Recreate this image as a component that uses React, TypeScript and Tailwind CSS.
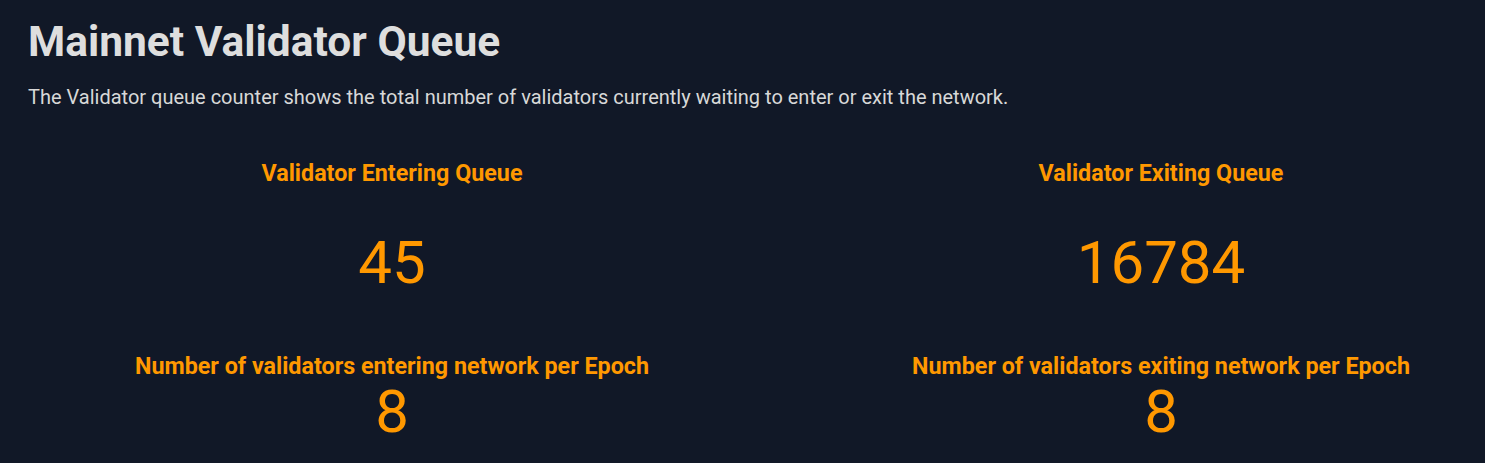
import React from 'react';

type QueueStat = {
  title: string;
  count: number;
  perEpochLabel: string;
  perEpoch: number;
};

const stats: QueueStat[] = [
  {
    title: 'Validator Entering Queue',
    count: 45,
    perEpochLabel: 'Number of validators entering network per Epoch',
    perEpoch: 8,
  },
  {
    title: 'Validator Exiting Queue',
    count: 16784,
    perEpochLabel: 'Number of validators exiting network per Epoch',
    perEpoch: 8,
  },
];

const QueueColumn: React.FC<{ stat: QueueStat }> = ({ stat }) => (
  <div className="flex flex-col items-center text-center text-[#ff9800]">
    <h2 className="text-[23.3px] font-bold leading-8">{stat.title}</h2>
    <div className="mt-[44px] text-6xl leading-none">{stat.count}</div>
    <h3 className="mt-[57px] text-[23.3px] font-bold leading-8">{stat.perEpochLabel}</h3>
    <div className="text-6xl leading-none">{stat.perEpoch}</div>
  </div>
);

const App: React.FC = () => {
  return (
    <div className="min-h-screen bg-[#111827] px-7 pt-[21px] font-['Roboto',sans-serif]">
      <h1 className="text-[42.5px] font-bold leading-[42px] text-[#dedede]">Mainnet Validator Queue</h1>
      <p className="mt-5 text-xl text-[#d8d8d8]">
        The Validator queue counter shows the total number of validators currently waiting to enter or exit the network.
      </p>

      <div className="mt-[46px] ml-10 grid grid-cols-[648px_648px] gap-x-[121px]">
        {stats.map((stat) => (
          <QueueColumn key={stat.title} stat={stat} />
        ))}
      </div>
    </div>
  );
};

export default App;
